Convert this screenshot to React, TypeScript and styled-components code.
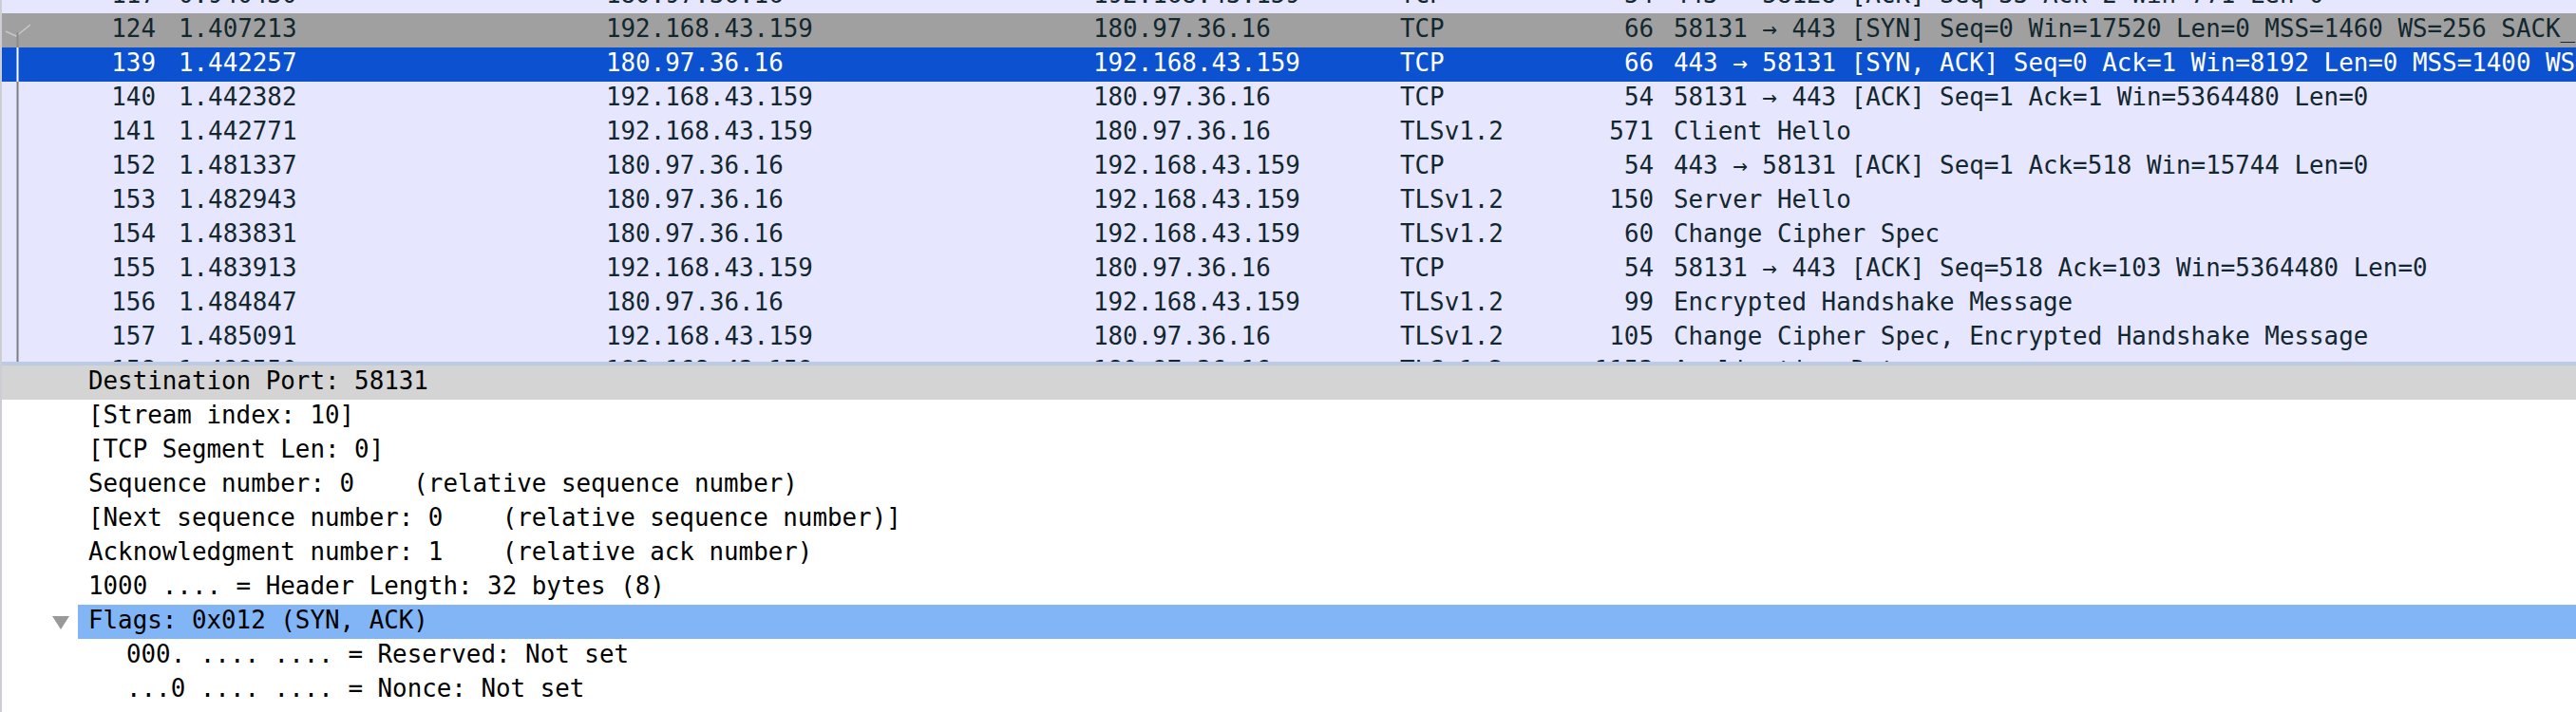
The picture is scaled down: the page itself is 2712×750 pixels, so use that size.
import React from "react";
import styled, { createGlobalStyle } from "styled-components";

const GlobalStyle = createGlobalStyle`
  html, body {
    margin: 0;
    padding: 0;
    background: #ffffff;
    overflow: hidden;
  }
`;

const Window = styled.div`
  width: 2712px;
  height: 750px;
  box-sizing: border-box;
  display: flex;
  flex-direction: column;
  overflow: hidden;
  border-left: 2px solid #cdcdd4;
  font-family: "DejaVu Sans Mono", "Liberation Mono", monospace;
  font-size: 25.85px;
`;

const PacketList = styled.div`
  flex: none;
  height: 381px;
  overflow: hidden;
  background: #e7e6ff;
`;

const ListBody = styled.div`
  margin-top: -22px;
`;

type Tone = "normal" | "syn" | "selected";

const rowBg: Record<Tone, string> = {
  normal: "#e7e6ff",
  syn: "#a0a0a0",
  selected: "#0c52d0",
};

const rowFg: Record<Tone, string> = {
  normal: "#12272e",
  syn: "#12272e",
  selected: "#ffffff",
};

const PacketRow = styled.div<{ $tone: Tone }>`
  display: grid;
  grid-template-columns: 38px 124px 474px 513px 323px 180px 87px minmax(0, 1fr);
  height: 36px;
  line-height: 33px;
  white-space: pre;
  background: ${(p) => rowBg[p.$tone]};
  color: ${(p) => rowFg[p.$tone]};
`;

const Cell = styled.div<{ $align?: "left" | "right"; $pad?: number }>`
  min-width: 0;
  overflow: hidden;
  text-align: ${(p) => p.$align ?? "left"};
  padding-left: ${(p) => p.$pad ?? 0}px;
`;

const MarkCell = styled.div`
  position: relative;
  height: 36px;
`;

const MarkSvg = styled.svg`
  display: block;
`;

type Mark = "none" | "start" | "line";

const RelMark: React.FC<{ mark: Mark; selected: boolean }> = ({ mark, selected }) => {
  if (mark === "none") return <MarkCell />;
  const stroke = selected ? "#ffffff" : "#7d7d7d";
  return (
    <MarkCell>
      <MarkSvg width="38" height="36" viewBox="0 0 38 36">
        {mark === "start" ? (
          <>
            <polyline
              points="4,19 15,24 30,12"
              fill="none"
              stroke="#c8c8c8"
              strokeWidth="1.6"
              strokeLinejoin="round"
            />
            <line x1="16.5" y1="20" x2="16.5" y2="36" stroke="#8a8a8a" strokeWidth="2" />
          </>
        ) : (
          <line x1="16.5" y1="0" x2="16.5" y2="36" stroke={stroke} strokeWidth="2" />
        )}
      </MarkSvg>
    </MarkCell>
  );
};

type Packet = {
  no: string;
  time: string;
  src: string;
  dst: string;
  proto: string;
  len: string;
  info: string;
  tone: Tone;
  mark: Mark;
};

const A = "192.168.43.159";
const B = "180.97.36.16";

const packets: Packet[] = [
  { no: "117", time: "0.940430", src: B, dst: A, proto: "TCP", len: "54", info: "443 → 58128 [ACK] Seq=33 Ack=2 Win=771 Len=0", tone: "normal", mark: "none" },
  { no: "124", time: "1.407213", src: A, dst: B, proto: "TCP", len: "66", info: "58131 → 443 [SYN] Seq=0 Win=17520 Len=0 MSS=1460 WS=256 SACK_PERM=1", tone: "syn", mark: "start" },
  { no: "139", time: "1.442257", src: B, dst: A, proto: "TCP", len: "66", info: "443 → 58131 [SYN, ACK] Seq=0 Ack=1 Win=8192 Len=0 MSS=1400 WS=256 SACK_PERM=1", tone: "selected", mark: "line" },
  { no: "140", time: "1.442382", src: A, dst: B, proto: "TCP", len: "54", info: "58131 → 443 [ACK] Seq=1 Ack=1 Win=5364480 Len=0", tone: "normal", mark: "line" },
  { no: "141", time: "1.442771", src: A, dst: B, proto: "TLSv1.2", len: "571", info: "Client Hello", tone: "normal", mark: "line" },
  { no: "152", time: "1.481337", src: B, dst: A, proto: "TCP", len: "54", info: "443 → 58131 [ACK] Seq=1 Ack=518 Win=15744 Len=0", tone: "normal", mark: "line" },
  { no: "153", time: "1.482943", src: B, dst: A, proto: "TLSv1.2", len: "150", info: "Server Hello", tone: "normal", mark: "line" },
  { no: "154", time: "1.483831", src: B, dst: A, proto: "TLSv1.2", len: "60", info: "Change Cipher Spec", tone: "normal", mark: "line" },
  { no: "155", time: "1.483913", src: A, dst: B, proto: "TCP", len: "54", info: "58131 → 443 [ACK] Seq=518 Ack=103 Win=5364480 Len=0", tone: "normal", mark: "line" },
  { no: "156", time: "1.484847", src: B, dst: A, proto: "TLSv1.2", len: "99", info: "Encrypted Handshake Message", tone: "normal", mark: "line" },
  { no: "157", time: "1.485091", src: A, dst: B, proto: "TLSv1.2", len: "105", info: "Change Cipher Spec, Encrypted Handshake Message", tone: "normal", mark: "line" },
  { no: "158", time: "1.488550", src: A, dst: B, proto: "TLSv1.2", len: "1153", info: "Application Data", tone: "normal", mark: "line" },
];

const Splitter = styled.div`
  flex: none;
  height: 4px;
  background: #bccbe3;
`;

const DetailPane = styled.div`
  flex: 1;
  min-height: 0;
  overflow: hidden;
  background: #ffffff;
  color: #000000;
`;

const DetailRow = styled.div<{ $hover?: boolean }>`
  display: flex;
  height: 36px;
  line-height: 33px;
  white-space: pre;
  background: ${(p) => (p.$hover ? "#d4d4d4" : "transparent")};
`;

const Indent = styled.div<{ $level: number }>`
  flex: none;
  box-sizing: border-box;
  width: ${(p) => 40 + p.$level * 40}px;
  display: flex;
  justify-content: flex-end;
  align-items: center;
  padding-right: 9px;
  padding-top: 2px;
`;

const Label = styled.div<{ $selected?: boolean }>`
  flex: 1;
  min-width: 0;
  overflow: hidden;
  padding-left: 11px;
  background: ${(p) => (p.$selected ? "#81b5f5" : "transparent")};
`;

const Disclosure: React.FC = () => (
  <svg width="18" height="14" viewBox="0 0 18 14">
    <polygon points="0,0 18,0 9,14" fill="#999999" />
  </svg>
);

type Field = {
  text: string;
  level: number;
  hover?: boolean;
  selected?: boolean;
  expanded?: boolean;
};

const fields: Field[] = [
  { text: "Destination Port: 58131", level: 1, hover: true },
  { text: "[Stream index: 10]", level: 1 },
  { text: "[TCP Segment Len: 0]", level: 1 },
  { text: "Sequence number: 0    (relative sequence number)", level: 1 },
  { text: "[Next sequence number: 0    (relative sequence number)]", level: 1 },
  { text: "Acknowledgment number: 1    (relative ack number)", level: 1 },
  { text: "1000 .... = Header Length: 32 bytes (8)", level: 1 },
  { text: "Flags: 0x012 (SYN, ACK)", level: 1, selected: true, expanded: true },
  { text: "000. .... .... = Reserved: Not set", level: 2 },
  { text: "...0 .... .... = Nonce: Not set", level: 2 },
  { text: ".... 0... .... = Congestion Window Reduced (CWR): Not set", level: 2 },
];

export default function App() {
  return (
    <>
      <GlobalStyle />
      <Window>
        <PacketList>
          <ListBody>
            {packets.map((p) => (
              <PacketRow key={p.no} $tone={p.tone}>
                <RelMark mark={p.mark} selected={p.tone === "selected"} />
                <Cell $align="right">{p.no}</Cell>
                <Cell $pad={24}>{p.time}</Cell>
                <Cell>{p.src}</Cell>
                <Cell>{p.dst}</Cell>
                <Cell>{p.proto}</Cell>
                <Cell $align="right">{p.len}</Cell>
                <Cell $pad={21}>{p.info}</Cell>
              </PacketRow>
            ))}
          </ListBody>
        </PacketList>
        <Splitter />
        <DetailPane>
          {fields.map((f) => (
            <DetailRow key={f.text} $hover={f.hover}>
              <Indent $level={f.level}>{f.expanded ? <Disclosure /> : null}</Indent>
              <Label $selected={f.selected}>{f.text}</Label>
            </DetailRow>
          ))}
        </DetailPane>
      </Window>
    </>
  );
}
